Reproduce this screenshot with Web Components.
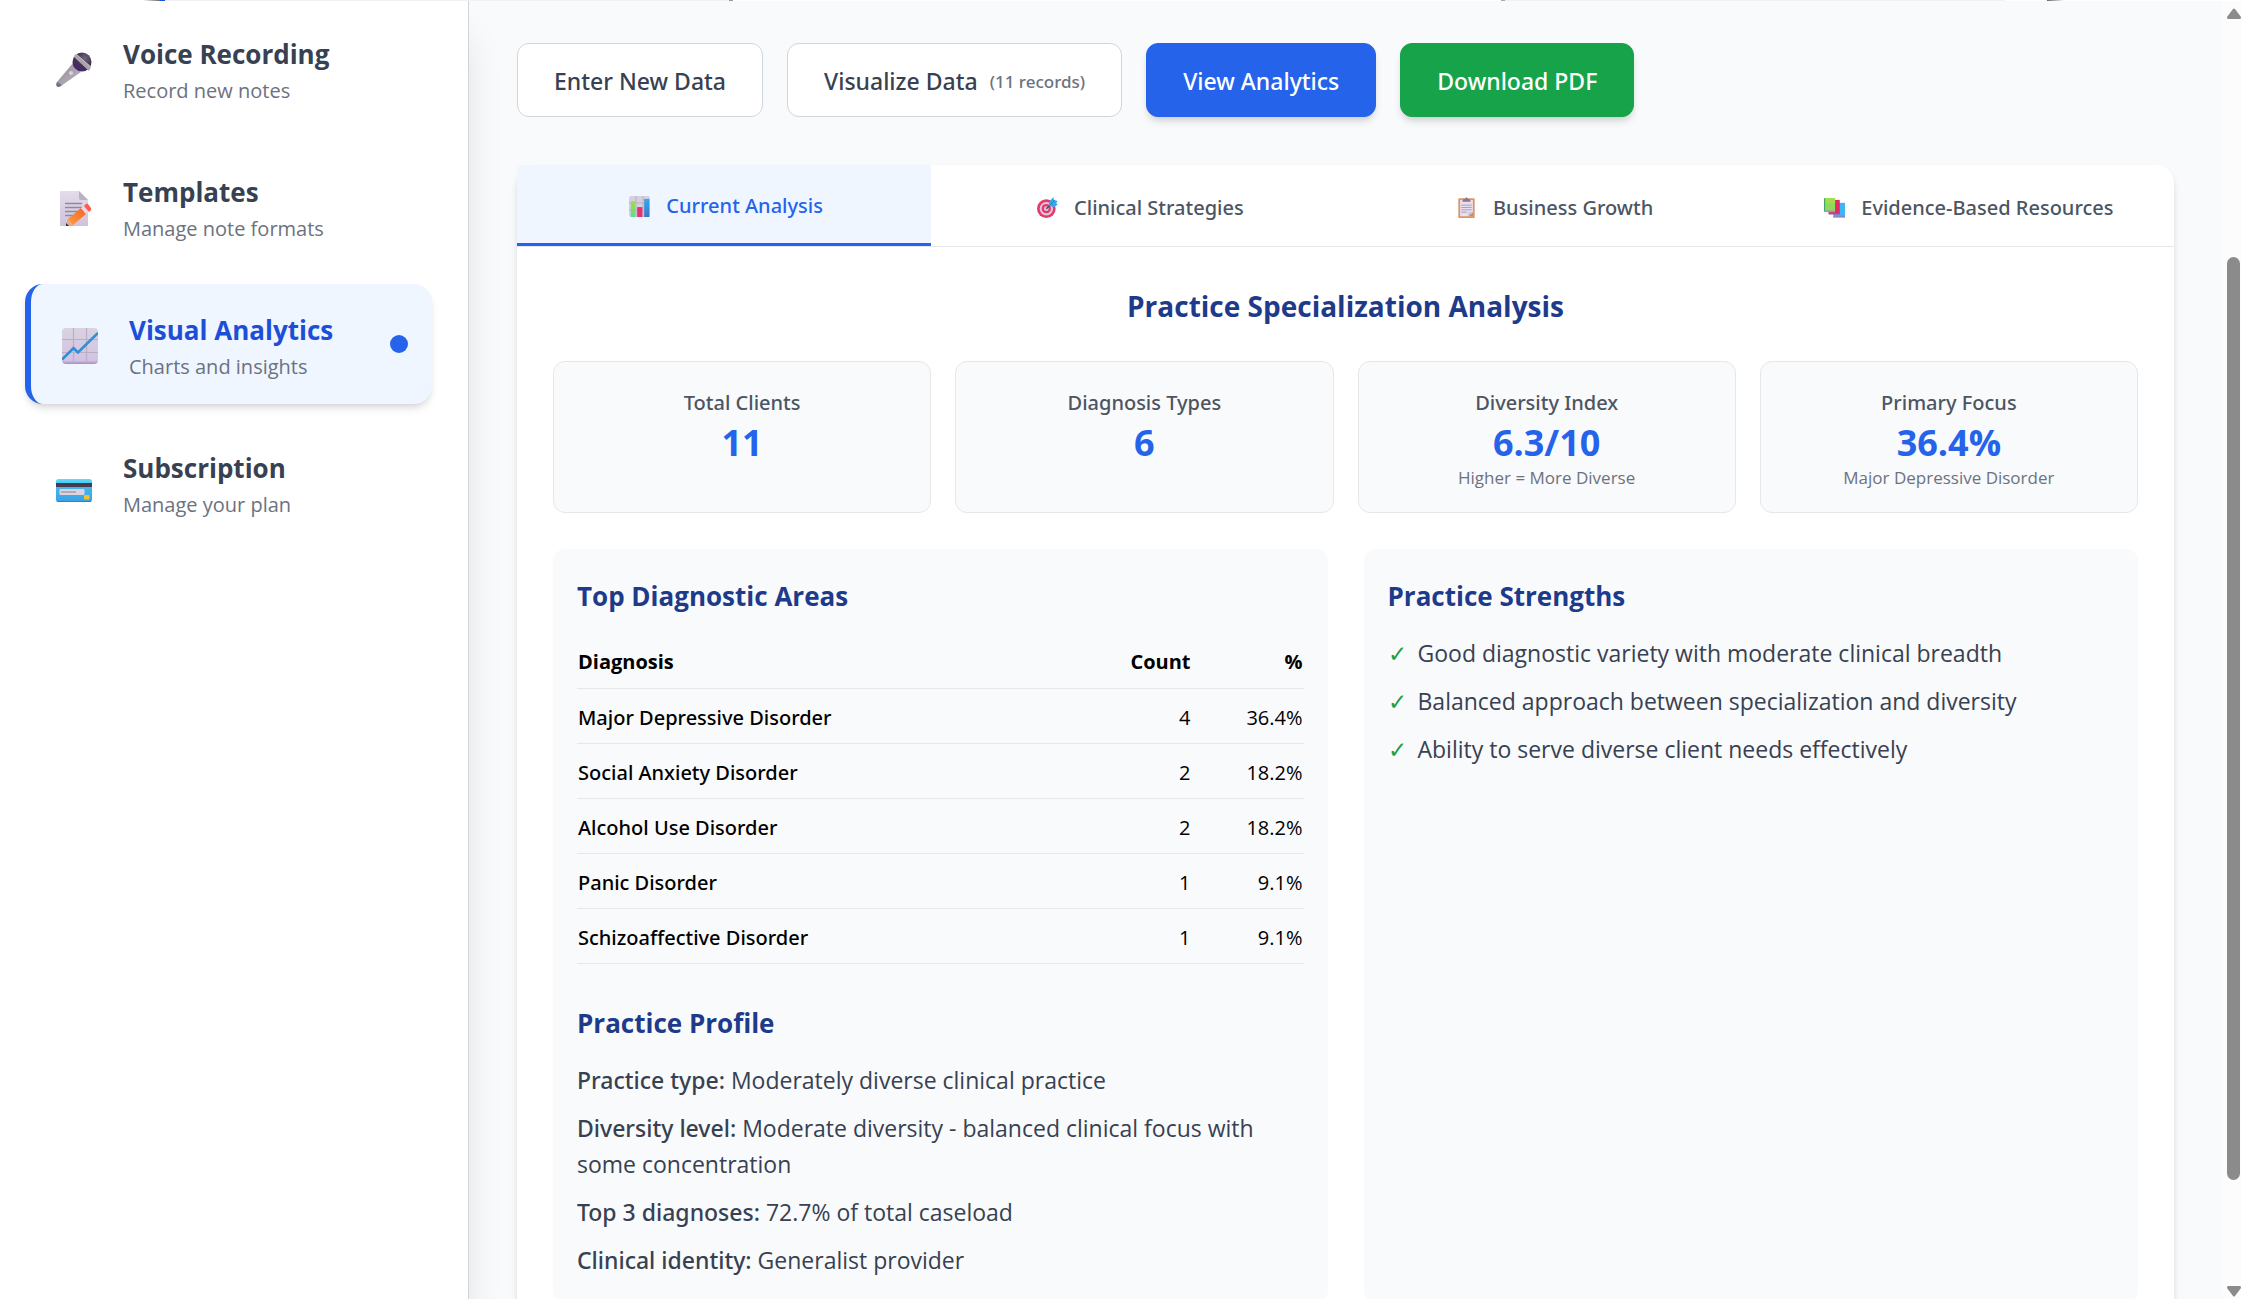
<!DOCTYPE html>
<html lang="en">
<head>
<meta charset="utf-8">
<title>Visual Analytics</title>
<style>
  html, body { margin: 0; height: 100%; }
  body {
    --blue: #2563eb; --navy: #1e3a8a; --ink: #374151; --body: #4b5563; --muted: #6b7280; --line: #e5e7eb; --surface: #f9fafb;
    --medium: "Noto Sans", sans-serif;
    font-family: "Open Sans", "Noto Sans", sans-serif; font-size: 23px; line-height: 36px; color: var(--ink); overflow: hidden;
  }
</style>
</head>
<body>
<app-shell>
  <nav-item slot="nav" icon="mic" label="Voice Recording">Record new notes</nav-item>
  <nav-item slot="nav" icon="memo" label="Templates">Manage note formats</nav-item>
  <nav-item slot="nav" icon="trend" label="Visual Analytics" active>Charts and insights</nav-item>
  <nav-item slot="nav" icon="card" label="Subscription">Manage your plan</nav-item>

  <action-bar>
    <action-button>Enter New Data</action-button>
    <action-button note="(11 records)">Visualize Data</action-button>
    <action-button kind="primary">View Analytics</action-button>
    <action-button kind="success">Download PDF</action-button>
  </action-bar>

  <analysis-card heading="Practice Specialization Analysis">
    <tab-item slot="tabs" icon="bars" active>Current Analysis</tab-item>
    <tab-item slot="tabs" icon="target">Clinical Strategies</tab-item>
    <tab-item slot="tabs" icon="clipboard">Business Growth</tab-item>
    <tab-item slot="tabs" icon="books">Evidence-Based Resources</tab-item>

    <stat-card slot="stats" label="Total Clients" value="11"></stat-card>
    <stat-card slot="stats" label="Diagnosis Types" value="6"></stat-card>
    <stat-card slot="stats" label="Diversity Index" value="6.3/10">Higher = More Diverse</stat-card>
    <stat-card slot="stats" label="Primary Focus" value="36.4%">Major Depressive Disorder</stat-card>

    <info-panel>
      <panel-section heading="Top Diagnostic Areas"><diagnosis-table></diagnosis-table></panel-section>
      <panel-section heading="Practice Profile">
        <profile-line label="Practice type:">Moderately diverse clinical practice</profile-line>
        <profile-line label="Diversity level:">Moderate diversity - balanced clinical focus with some concentration</profile-line>
        <profile-line label="Top 3 diagnoses:">72.7% of total caseload</profile-line>
        <profile-line label="Clinical identity:">Generalist provider</profile-line>
      </panel-section>
    </info-panel>
    <info-panel>
      <panel-section heading="Practice Strengths">
        <check-line>Good diagnostic variety with moderate clinical breadth</check-line>
        <check-line>Balanced approach between specialization and diversity</check-line>
        <check-line>Ability to serve diverse client needs effectively</check-line>
      </panel-section>
    </info-panel>
  </analysis-card>
</app-shell>

<script>
// Every icon is drawn on a 36 x 36 grid.
const ICONS = {
  mic: `
    <defs>
      <linearGradient id="h" x1="0" y1="0" x2="1" y2="1"><stop offset="0" stop-color="#8d8792"/><stop offset="1" stop-color="#c3bccb"/></linearGradient>
      <radialGradient id="b" cx=".65" cy=".3" r=".8"><stop offset="0" stop-color="#71667c"/><stop offset=".5" stop-color="#43344f"/><stop offset="1" stop-color="#4b2376"/></radialGradient>
    </defs>
    <path d="M17 11 L1 30 Q-1 35 3 35 L5 34 L25 20 Z" fill="url(#h)"/>
    <path d="M1 30 Q-1 35 3 35 L6 33 Z" fill="#77717c"/>
    <circle cx="15" cy="21" r="2" fill="#d8d2df"/>
    <circle cx="26" cy="10" r="9.5" fill="url(#b)"/>
    <path d="M18 5 L20 2 L35 15 L33 19 Z" fill="#aaa4ae"/>
    <path d="M18 5 L20 2 L35 15" fill="none" stroke="#c9c4cd"/>`,
  memo: `
    <defs><linearGradient id="p" x1="0" y1="0" x2="0" y2="1"><stop offset="0" stop-color="#e3dce9"/><stop offset="1" stop-color="#cfc3dc"/></linearGradient>
    <linearGradient id="o" x1="0" y1="1" x2="1" y2="0"><stop offset="0" stop-color="#ffa23e"/><stop offset="1" stop-color="#f3642b"/></linearGradient></defs>
    <path d="M4 2 Q4 1 5 1 H23 L32 10 V36 H4 Z" fill="url(#p)"/>
    <path d="M23 1 V8 Q23 10 25 10 H32 Z" fill="#b9b0c3"/>
    <path d="M9 13.5 H26 M9 17.5 H26 M9 21.5 H22 M9 25.5 H17" stroke="#918a9b" stroke-width="1.3"/>
    <path d="M12 29 L25 18 L30 24 L16 36 H10 Z" fill="url(#o)"/>
    <path d="M12 29 L17 35 L16 36 H10 Z" fill="#e9ad83"/><path d="M10 33 L13 36 H10 Z" fill="#33283c"/>
    <path d="M25 18 L28 16 L33 22 L30 24 Z" fill="#e4d8ee"/>
    <path d="M28 16 L30 14 Q31 13 32 14 L35 18 Q36 20 34 21 L33 22 Z" fill="#ff5d4b"/>`,
  trend: `
    <defs><linearGradient id="t" x1="0" y1="0" x2="0" y2="1"><stop offset="0" stop-color="#d9d3df"/><stop offset=".9" stop-color="#d2c3e4"/><stop offset="1" stop-color="#a98bc2"/></linearGradient></defs>
    <rect width="36" height="36" rx="4" fill="url(#t)"/>
    <path d="M11.5 0 V35 M24.5 0 V35 M0 11.5 H36 M0 24.5 H36" stroke="#b9aec4" stroke-width="1.2"/>
    <path d="M0 31.5 L11.5 20 L16 24.5 L36 5" fill="none" stroke="#2f8fd6" stroke-width="2.6"/>`,
  card: `
    <defs><linearGradient id="c" x1="0" y1="0" x2="0" y2="1"><stop offset="0" stop-color="#5be0fb"/><stop offset=".3" stop-color="#46b9ee"/><stop offset="1" stop-color="#37a1e6"/></linearGradient></defs>
    <rect y="13" width="36" height="23" rx="2.5" fill="url(#c)"/>
    <path d="M1 35.5 H35" stroke="#2b82c4"/>
    <rect y="17" width="36" height="4" fill="#453c4e"/>
    <rect x="3.5" y="23" width="25" height="6" rx="1" fill="#d9d4df"/><path d="M5 26 H20" stroke="#a59cae" stroke-width="1.5"/>
    <rect x="28" y="29" width="5.5" height="4.5" rx="1" fill="#f2c232"/>`,
  bars: `
    <defs><linearGradient id="g" x1="0" y1="0" x2="0" y2="1"><stop offset="0" stop-color="#a9d84d"/><stop offset="1" stop-color="#5fdc8e"/></linearGradient>
    <linearGradient id="u" x1="0" y1="0" x2="0" y2="1"><stop offset="0" stop-color="#35a8ef"/><stop offset="1" stop-color="#3b77c4"/></linearGradient></defs>
    <rect width="36" height="36" rx="4" fill="#d6cfde"/>
    <path d="M12 0 V36 M24 0 V36 M0 12 H36 M0 24 H36" stroke="#b7aec2" stroke-width="1.5"/>
    <rect x="3" y="9" width="8" height="27" fill="url(#g)"/><rect x="14" y="19" width="9" height="17" fill="#e8306d"/><rect x="26" y="5" width="9" height="31" fill="url(#u)"/>`,
  target: `
    <circle cx="16" cy="20" r="16" fill="#e23a69"/><circle cx="16" cy="20" r="11.5" fill="#dcc9e0"/>
    <circle cx="16" cy="20" r="8" fill="#e23a69"/><circle cx="16" cy="20" r="4" fill="#dcc9e0"/>
    <path d="M16 20 L25 11" stroke="#50476b" stroke-width="2.5"/>
    <path d="M20 15 L22 7 L28 0 L29 5 L35 7 L33 11 L36 13 L29 17 Z" fill="#35a9ee"/><path d="M22 14 L31 5" stroke="#2279bd" stroke-width="1.5"/>`,
  clipboard: `
    <rect x="4" y="2" width="28" height="34" rx="1.5" fill="#dd9460"/>
    <rect x="7" y="5" width="22" height="28" fill="#e7deef"/>
    <path d="M29 26 V33 H21 Z" fill="#c98a66"/><path d="M21 33 V28 Q21 26 23 26 H29 Z" fill="#cbbcd9"/>
    <path d="M9 14 H27 M9 18 H27 M9 22 H27 M9 26 H19" stroke="#a79db4" stroke-width="1.6"/>
    <path d="M11 8 Q11 3 16 3 Q18 -2 20 3 Q25 3 25 8 Z" fill="#857b8d"/>`,
  books: `
    <path d="M16 10 H36 V35 H16 Z" fill="#3fb5f5"/><path d="M16 32 H36 V35 H16 Z" fill="#8587cf"/>
    <path d="M8 5 H27 V29 H8 Z" fill="#e32a5f"/><path d="M8 27 H27 V30 H8 Z" fill="#a84d94"/>
    <path d="M0 2 H19 V25 H0 Z" fill="#8edb5b"/><path d="M0 2 H2 V25 H0 Z" fill="#45a36c"/>
    <path d="M1 23 H19 V26 H1 Z" fill="#9c9ab1"/><path d="M3 2 H19 V11 H3 Z" fill="#a4dc4d"/>`,
};

const icon = (name) => `<svg class="icon" viewBox="0 0 36 36" aria-hidden="true">${ICONS[name]}</svg>`;

// Small base: each element only says what its shadow root holds.
class BaseElement extends HTMLElement {
  connectedCallback() {
    if (this.shadowRoot) return;
    this.attachShadow({ mode: 'open' }).innerHTML = this.render();
  }
  attr(name) { return this.getAttribute(name) || ''; }
}

class AppShell extends BaseElement {
  render() {
    return `
<style>
  :host { display: flex; flex-direction: column; height: 100vh; overflow: hidden; }
  header {
    flex: none; height: 1px;
    background: linear-gradient(90deg, #fff 143px, #666 160px, #1d4ed8 160px 165px, #f0f1f2 165px 729px, #999 729px 733px, #fff 733px 1501px, #aaa 1501px 1505px, #f0f1f2 1505px 2005px, #fff 2005px 2047px, #666 2047px, #fff 2064px);
  }
  .columns { flex: 1; min-height: 0; display: flex; }
  nav {
    flex: none; box-sizing: border-box; width: 469px; padding: 7px 36px 0 25px; display: flex; flex-direction: column; gap: 18px;
    background: white; border-right: 1px solid #d1d5db; box-shadow: 0 30px 38px -8px rgba(0,0,0,0.14); z-index: 1;
  }
  main { flex: 1; min-width: 0; overflow: hidden; padding: 42px 48px 0; background: var(--surface); }
</style>
<header></header>
<div class="columns">
  <nav><slot name="nav"></slot></nav>
  <main><slot></slot></main>
  <page-scrollbar></page-scrollbar>
</div>`;
  }
}

class NavItem extends BaseElement {
  render() {
    return `
<style>
  :host { display: block; }
  a {
    display: flex; align-items: center; gap: 24px; min-height: 76px; padding: 22px 24px; border-radius: 18px;
    color: var(--ink); text-decoration: none;
  }
  :host([active]) a { background: #eff6ff; border-left: 6px solid var(--blue); box-shadow: 0 6px 9px -2px rgba(0,0,0,0.12), 0 3px 6px -3px rgba(0,0,0,0.1); }
  .icon { flex: none; width: 36px; height: 36px; padding: 4px 7px 0; }
  .text { flex: 1; padding-top: 3px; }
  strong { display: block; font-size: 26px; font-weight: 700; line-height: 42px; }
  :host([active]) strong { color: #1d4ed8; }
  small { display: block; font-size: 20px; line-height: 31px; color: var(--muted); }
  .dot { display: none; width: 18px; height: 18px; border-radius: 50%; background: var(--blue); }
  :host([active]) .dot { display: block; }
</style>
<a href="#">${icon(this.attr('icon'))}<span class="text"><strong>${this.attr('label')}</strong><small><slot></slot></small></span><span class="dot"></span></a>`;
  }
}

class ActionBar extends BaseElement {
  render() {
    return `
<style>
  :host { display: flex; flex-wrap: wrap; gap: 24px; margin-bottom: 48px; }
</style>
<slot></slot>`;
  }
}

class ActionButton extends BaseElement {
  render() {
    const note = this.attr('note');
    return `
<style>
  :host { display: block; }
  button {
    display: flex; align-items: center; gap: 12px; padding: 19px 36px 17px; border: 1px solid #d1d5db; border-radius: 12px;
    background: white; color: var(--ink); font: inherit; font-family: var(--medium); font-weight: 500; cursor: pointer;
  }
  small { padding-top: 2px; font-size: 17px; line-height: 34px; color: var(--muted); }
  :host([kind]) button { color: white; border-color: transparent; box-shadow: 0 6px 9px -2px rgba(0,0,0,0.14), 0 3px 6px -3px rgba(0,0,0,0.1); }
  :host([kind=primary]) button { background: var(--blue); border-color: var(--blue); }
  :host([kind=success]) button { background: #16a34a; border-color: #16a34a; }
</style>
<button type="button"><slot></slot>${note ? `<small>${note}</small>` : ''}</button>`;
  }
}

class AnalysisCard extends BaseElement {
  render() {
    return `
<style>
  :host { display: block; background: white; border-radius: 18px; box-shadow: 0 6px 9px -1px rgba(0,0,0,0.1), 0 3px 6px -2px rgba(0,0,0,0.1); }
  .tabs { display: grid; grid-template-columns: repeat(4, 1fr); border-bottom: 1px solid var(--line); }
  .body { padding: 36px; }
  h2 { margin: 0 0 32px; font-size: 28px; font-weight: 700; line-height: 46px; text-align: center; color: var(--navy); }
  .stats { display: grid; grid-template-columns: repeat(4, 1fr); gap: 24px; margin-bottom: 36px; }
  .panels { display: grid; grid-template-columns: repeat(2, 1fr); gap: 36px; }
</style>
<div class="tabs" role="tablist"><slot name="tabs"></slot></div>
<div class="body">
  <h2>${this.attr('heading')}</h2>
  <div class="stats"><slot name="stats"></slot></div>
  <div class="panels"><slot></slot></div>
</div>`;
  }
}

class TabItem extends BaseElement {
  render() {
    return `
<style>
  :host { display: block; }
  button {
    display: flex; align-items: center; justify-content: center; gap: 16px; width: 100%; height: 81px; padding: 4px 20px 0 24px; border: 0;
    background: none; color: var(--body); font: inherit; font-family: var(--medium); font-size: 20px; font-weight: 500; cursor: pointer;
  }
  .icon { width: 21px; height: 21px; }
  :host([active]) button { background: #eff6ff; color: var(--blue); border-bottom: 3px solid var(--blue); }
</style>
<button type="button" role="tab" aria-selected="${this.hasAttribute('active')}">${icon(this.attr('icon'))}<slot></slot></button>`;
  }
}

class StatCard extends BaseElement {
  render() {
    return `
<style>
  :host { display: block; min-height: 106px; padding: 24px 24px 20px; border: 1px solid var(--line); border-radius: 12px; background: var(--surface); text-align: center; }
  .label { font-family: var(--medium); font-size: 20px; font-weight: 500; line-height: 34px; color: var(--body); }
  .value { font-size: 36px; font-weight: 700; line-height: 46px; color: var(--blue); }
  .note { font-size: 17px; line-height: 24px; color: var(--muted); }
</style>
<div class="label">${this.attr('label')}</div>
<div class="value">${this.attr('value')}</div>
<div class="note"><slot></slot></div>`;
  }
}

class InfoPanel extends BaseElement {
  render() {
    return `
<style>
  :host { display: flex; flex-direction: column; gap: 36px; padding: 24px; border-radius: 12px; background: var(--surface); }
</style>
<slot></slot>`;
  }
}

class PanelSection extends BaseElement {
  render() {
    return `
<style>
  :host { display: block; }
  h3 { margin: 0 0 16px; font-size: 26px; font-weight: 700; line-height: 46px; color: var(--navy); }
  .items { display: flex; flex-direction: column; gap: 12px; }
</style>
<h3>${this.attr('heading')}</h3>
<div class="items"><slot></slot></div>`;
  }
}

class ProfileLine extends BaseElement {
  render() {
    return `
<style>
  :host { display: block; }
  strong { font-family: var(--medium); font-weight: 500; }
</style>
<strong>${this.attr('label')}</strong> <slot></slot>`;
  }
}

class CheckLine extends BaseElement {
  render() {
    return `
<style>
  :host { display: flex; gap: 12px; }
  .mark { flex: none; width: 18px; color: #16a34a; }
</style>
<span class="mark">✓</span><span><slot></slot></span>`;
  }
}

class DiagnosisTable extends BaseElement {
  get rows() {
    return [
      ['Major Depressive Disorder', 4, '36.4%'],
      ['Social Anxiety Disorder', 2, '18.2%'],
      ['Alcohol Use Disorder', 2, '18.2%'],
      ['Panic Disorder', 1, '9.1%'],
      ['Schizoaffective Disorder', 1, '9.1%'],
    ];
  }
  render() {
    return `
<style>
  :host { display: block; }
  table { width: 100%; border-collapse: collapse; font-size: 20px; color: black; }
  tr { border-bottom: 1px solid var(--line); }
  th, td { box-sizing: border-box; height: 55px; padding: 4px 1px 0; text-align: right; }
  th { height: 53px; padding-top: 2px; font-weight: 700; }
  th:first-child, td:first-child { text-align: left; }
  td:first-child { font-family: var(--medium); font-weight: 500; }
  th:last-child { width: 112px; }
</style>
<table>
  <thead><tr><th scope="col">Diagnosis</th><th scope="col">Count</th><th scope="col">%</th></tr></thead>
  <tbody>${this.rows.map(([name, count, share]) => `<tr><td>${name}</td><td>${count}</td><td>${share}</td></tr>`).join('')}</tbody>
</table>`;
  }
}

class PageScrollbar extends BaseElement {
  render() {
    return `
<style>
  :host { flex: none; width: 19px; box-sizing: border-box; padding: 7px 1px 2px 5px; display: flex; flex-direction: column; align-items: center; background: #fcfcfc; }
  svg { flex: none; width: 14px; height: 11px; fill: #8b8b8b; }
  .track { flex: 1; width: 13px; display: grid; grid-template-rows: 238fr 923fr 106fr; }
  .thumb { grid-row: 2; border-radius: 7px; background: #8b8b8b; }
</style>
<svg viewBox="0 0 14 11"><path d="M6 1 Q7 0 8 1 L14 9 Q14 11 13 11 H1 Q0 11 0 9 Z"/></svg>
<div class="track"><div class="thumb"></div></div>
<svg viewBox="0 0 14 11"><path d="M6 10 Q7 11 8 10 L14 2 Q14 0 13 0 H1 Q0 0 0 2 Z"/></svg>`;
  }
}

customElements.define('page-scrollbar', PageScrollbar);
customElements.define('diagnosis-table', DiagnosisTable);
customElements.define('check-line', CheckLine);
customElements.define('profile-line', ProfileLine);
customElements.define('panel-section', PanelSection);
customElements.define('info-panel', InfoPanel);
customElements.define('stat-card', StatCard);
customElements.define('tab-item', TabItem);
customElements.define('analysis-card', AnalysisCard);
customElements.define('action-button', ActionButton);
customElements.define('action-bar', ActionBar);
customElements.define('nav-item', NavItem);
customElements.define('app-shell', AppShell);
</script>
</body>
</html>
